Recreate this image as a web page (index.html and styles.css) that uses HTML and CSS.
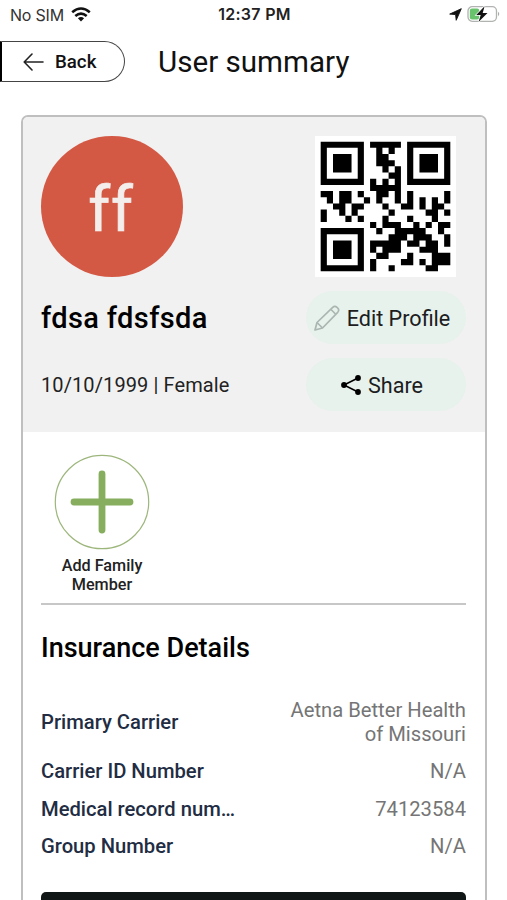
FILE: index.html
```html
<!DOCTYPE html>
<html lang="en">
<head>
<meta charset="utf-8">
<meta name="viewport" content="width=device-width, initial-scale=1">
<title>User summary</title>
<link rel="stylesheet" href="styles.css">
</head>
<body>
<div class="status">
  <div class="status-left">
    <span class="carrier">No SIM</span>
    <svg class="wifi" viewBox="0 0 20 15" width="20" height="15"><g fill="none" stroke="#111" stroke-width="2.6"><path d="M1.2 5.2Q10-2.2 18.8 5.2"/><path d="M4.3 8.9Q10 4.2 15.7 8.9"/></g><path d="M10 14.5 6.9 11.3Q10 8.9 13.1 11.3z" fill="#111"/></svg>
  </div>
  <span class="clock">12:37 PM</span>
  <div class="status-right">
    <svg viewBox="0 0 13 13" width="13" height="13"><path d="M12.3.7.7 6.100l5.900.5.6 5.700z" fill="#111" stroke="#111" stroke-width=".9" stroke-linejoin="round"/></svg>
    <svg viewBox="0 0 34 18" width="34" height="18"><rect x="1" y="1.7" width="28.5" height="14.6" rx="4.2" fill="#fff" stroke="#b0b3b0" stroke-width="1.3"/><path d="M31.2 6.8q2 2.2 0 4.4z" fill="#999"/><rect x="2.8" y="3.5" width="9.5" height="11" rx="2.2" fill="#68c36c"/><path d="M17.6 1.2 9.2 10h4.5l-2.2 7 9-9.1h-4.8z" fill="#111" stroke="#fff" stroke-width="1.4" paint-order="stroke"/></svg>
  </div>
</div>
<header class="topbar">
  <button class="back" type="button">
    <svg viewBox="0 0 21 18" width="21" height="18"><path d="M20 9H1.2M9 1 1.2 9 9 17" fill="none" stroke="#222" stroke-width="1.6" stroke-linecap="round" stroke-linejoin="round"/></svg>
    <span>Back</span>
  </button>
  <h1>User summary</h1>
</header>
<main class="card">
  <section class="profile">
    <div class="media">
      <div class="avatar"><span>ff</span></div>
      <svg class="qr" viewBox="-.92 -.92 22.84 22.84" width="141" height="141">
        <rect x="-.92" y="-.92" width="22.84" height="22.84" fill="#fff"/>
        <g fill="none" stroke="#000">
          <path d="M.5.5h6v6h-6zM14.5.5h6v6h-6zM.5 14.5h6v6h-6z"/>
          <path d="M8 .5h5M9 1.5h1m1 0h1M9 2.5h2M9 3.5h3M10 4.5h1m1 0h1M11 5.5h2M8 6.5h1m1 0h1m1 0h1M8 7.5h5M0 8.5h2m1 0h2m1 0h1m2 0h2m1 0h1m1 0h1m5 0h1M1 9.5h1m1 0h2m2 0h1m1 0h1m2 0h1m1 0h1m1 0h1m1 0h1m1 0h1M2 10.5h2m1 0h2m3 0h1m2 0h2m1 0h1m1 0h2M0 11.5h1m2 0h1m1 0h1m5 0h1m5 0h2m1 0h1M0 12.5h1m3 0h1m1 0h1m3 0h1m3 0h1m3 0h1M8 13.5h1m1 0h3m2 0h1m1 0h1m1 0h2M9 14.5h1m2 0h5m2 0h1M11 15.5h3m1 0h3m2 0h1M8 16.5h5m1 0h2m1 0h2m1 0h1M8 17.5h1m1 0h3m3 0h3M9 18.5h2m3 0h1m3 0h3M8 19.5h1m4 0h2m1 0h1m1 0h3M8 20.5h1m2 0h1m5 0h2"/>
        </g>
        <path d="M2 2h3v3H2zM16 2h3v3h-3zM2 16h3v3H2z"/>
      </svg>
    </div>
    <div class="row">
      <h2 class="name">fdsa fdsfsda</h2>
      <button class="pill pill-edit" type="button">
        <svg viewBox="0 0 26 26" width="26" height="26"><g fill="none" stroke="#abb5b2" stroke-width="1.7" stroke-linejoin="round"><path d="M1 25 3 17.500 18.700 2.300q2.200-2 4.300 0l.7.7q2 2.100 0 4.300L8.500 23z"/><path d="M3 17.500 8.500 23M17 4.500 21.500 9"/></g></svg>
        <span>Edit Profile</span>
      </button>
    </div>
    <div class="row">
      <p class="meta">10/10/1999 | Female</p>
      <button class="pill pill-share" type="button">
        <svg viewBox="0 0 20 20" width="20" height="20"><path d="M17 3 3 10l14 7" fill="none" stroke="#000" stroke-width="1.6"/><circle cx="17" cy="3" r="2.900"/><circle cx="3" cy="10" r="2.900"/><circle cx="17" cy="17" r="2.900"/></svg>
        <span>Share</span>
      </button>
    </div>
  </section>
  <section class="family">
    <div class="member">
      <svg viewBox="0 0 96 96" width="96" height="96"><circle cx="48" cy="48" r="46.700" fill="#fff" stroke="#9db67c" stroke-width="1.200"/><path d="M48 20v56M20 48h56" stroke="#86ae5e" stroke-width="6.800" stroke-linecap="round"/></svg>
      <span>Add Family<br>Member</span>
    </div>
  </section>
  <section class="insurance">
    <h2>Insurance Details</h2>
    <dl>
      <div class="item tall"><dt>Primary Carrier</dt><dd>Aetna Better Health<br>of Missouri</dd></div>
      <div class="item"><dt>Carrier ID Number</dt><dd>N/A</dd></div>
      <div class="item"><dt>Medical record num…</dt><dd>74123584</dd></div>
      <div class="item"><dt>Group Number</dt><dd>N/A</dd></div>
    </dl>
    <div class="action"></div>
  </section>
</main>
</body>
</html>
```
FILE: styles.css
```css
* { box-sizing: border-box; }
html, body { height: 900px; overflow: hidden; }
body { margin: 0; background: #fff; color: #111; font-family: Roboto, "Liberation Sans", sans-serif; display: flex; flex-direction: column; }
h1, h2, p, dl, dd { margin: 0; }
svg { display: block; flex: none; }
button { font: inherit; color: inherit; margin: 0; }

.status { flex: none; height: 28px; padding: 0 6px 0 10px; display: grid; grid-template-columns: 1fr auto 1fr; align-items: center; font: 16px/20px Inter, sans-serif; }
.status-left { display: flex; align-items: center; gap: 7px; color: #333; }
.carrier { letter-spacing: -.2px; padding-top: 1px; }
.clock { font-weight: 600; font-size: 16px; color: #222; letter-spacing: .3px; margin-left: -2px; }
.status-right { display: flex; align-items: center; justify-content: flex-end; gap: 5px; }

.topbar { flex: none; height: 87px; padding-top: 13px; display: flex; align-items: flex-start; gap: 33px; }
.back { width: 125px; height: 41px; padding: 0 0 0 21px; display: flex; align-items: center; gap: 11px; background: #fff; border: 1.500px solid #444; border-left: 2px solid #000; border-radius: 0 21px 21px 0; font-size: 18.700px; font-weight: 500; }
.topbar h1 { font-size: 29.600px; line-height: 42px; font-weight: 400; }

.card { flex: none; width: 466px; height: 820px; margin-left: 21px; border: 2px solid #bfbfbf; border-radius: 7px; overflow: hidden; background: #fff; }
.profile { height: 315px; padding: 19px 19px 0 18px; background: #f1f1f1; }
.media { display: flex; justify-content: space-between; align-items: flex-start; padding-right: 10px; }
.avatar { width: 142px; height: 141px; border-radius: 50%; background: #d45945; color: #f3eeec; display: flex; align-items: center; justify-content: center; font-size: 63px; letter-spacing: .8px; font-variant-ligatures: none; -webkit-text-stroke: .7px #f3eeec; }
.avatar span { padding: 5px 2px 0 0; }
.row { height: 53px; margin-top: 14px; display: flex; justify-content: space-between; align-items: center; }
.name { font-size: 29px; font-weight: 500; letter-spacing: .37px; color: #000; }
.meta { font-size: 20px; letter-spacing: .1px; color: #222; }
.pill { width: 160px; height: 53px; padding: 1px 0 0; border: 0; border-radius: 27px; background: #e7f2ec; display: flex; align-items: center; justify-content: center; gap: 7px; font-size: 21.600px; color: #1b201e; }
.pill-edit { padding-right: 8px; }
.pill-share { padding-right: 8px; }

.family { height: 173px; margin: 0 19px 0 18px; padding-top: 22px; border-bottom: 2px solid #c7c7c7; }
.member { width: 122px; display: flex; flex-direction: column; align-items: center; gap: 6px; font-size: 16.200px; line-height: 19px; font-weight: 500; text-align: center; color: #222; }

.insurance { padding: 26px 19px 0 18px; }
.insurance h2 { font-size: 27px; line-height: 34px; font-weight: 500; color: #000; }
dl { margin-top: 26px; }
.item { height: 37.700px; display: flex; justify-content: space-between; align-items: center; font-size: 20.200px; line-height: 24px; }
.item.tall { height: 61px; }
dt { font-weight: 500; color: #222d43; }
dd { text-align: right; color: #757575; }
.action { height: 60px; margin-top: 27px; border-radius: 5px; background: #101615; }
```
